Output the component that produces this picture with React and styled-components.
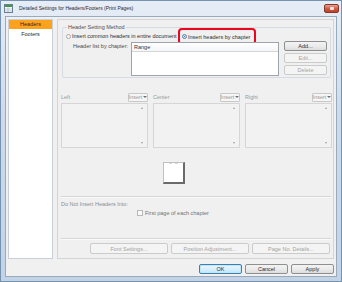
import React from "react";
import styled, { createGlobalStyle } from "styled-components";

const GlobalStyle = createGlobalStyle`
  html, body {
    margin: 0;
    padding: 0;
    background: #ffffff;
  }
  * {
    box-sizing: border-box;
  }
  body {
    font-family: "Liberation Sans", Arial, sans-serif;
    font-size: 5.5px;
    color: #222;
  }
`;

const Window = styled.div`
  width: 342px;
  height: 282px;
  border: 1px solid #7592b1;
  background: linear-gradient(#e6edf6, #cddbeb 40%, #c3d3e6);
  padding: 0 4px 4px 4px;
  display: flex;
  flex-direction: column;
`;

const TitleBar = styled.div`
  height: 15px;
  margin: 0 -4px;
  padding: 0 2px 0 3px;
  display: flex;
  align-items: flex-start;
`;

const AppIcon = styled.svg`
  width: 9px;
  height: 9px;
  margin-top: 3px;
  flex: none;
`;

const Title = styled.span`
  margin-left: 6px;
  line-height: 15px;
  font-size: 5px;
  color: #1f2a36;
  flex: 1;
  white-space: nowrap;
`;

const CloseButton = styled.div`
  width: 15px;
  height: 9px;
  margin-top: 3px;
  border: 1px solid #84382a;
  border-radius: 2px;
  background: linear-gradient(#e6a393, #cf5f48 50%, #c04128);
  display: flex;
  align-items: center;
  justify-content: center;

  &::after {
    content: "";
    width: 4px;
    height: 3px;
    background: #f4e4e0;
    border-radius: 1px;
  }
`;

const Client = styled.div`
  flex: 1;
  border: 1px solid #98aabd;
  background: #f0f0f0;
  padding: 2px;
  display: flex;
  flex-direction: column;
`;

const Main = styled.div`
  height: 240px;
  display: flex;
  gap: 4px;
`;

const SideList = styled.div`
  width: 45px;
  background: #ffffff;
  border: 1px solid #c9cfd6;
  display: flex;
  flex-direction: column;
`;

const SideItem = styled.div`
  height: 9px;
  line-height: 9px;
  text-align: center;
  color: #2a2a2a;
  background: ${(p) => (p.$active ? "#fca21d" : "transparent")};
  margin-bottom: 1px;
`;

const Panel = styled.div`
  width: 277px;
  border: 1px solid #d4d4d4;
  display: flex;
  flex-direction: column;
`;

const GroupBox = styled.fieldset`
  margin: 3px 2px 0 4px;
  padding: 0 3px 1px 3px;
  border: 1px solid #d5dbe0;
  border-radius: 2px;
  min-width: 0;
`;

const Legend = styled.legend`
  margin-left: 1px;
  padding: 0 1px;
  line-height: 8px;
  color: #4e4e4e;
`;

const RadioRow = styled.div`
  height: 10px;
  display: flex;
  align-items: center;
`;

const RadioOption = styled.label`
  display: flex;
  align-items: center;
  gap: 1px;
  width: ${(p) => (p.$width ? `${p.$width}px` : "auto")};
  color: #2e2e2e;
  white-space: nowrap;
`;

const Radio = styled.span`
  width: 5px;
  height: 5px;
  border-radius: 50%;
  border: 1px solid ${(p) => (p.$checked ? "#5f7fa3" : "#a8a8a8")};
  background: ${(p) =>
    p.$checked ? "radial-gradient(#3f7fc2 35%, #d7e4f1 45%)" : "#f6f6f6"};
  flex: none;
`;

const Highlight = styled.div`
  height: 17px;
  margin: -3px 0 -4px 0;
  padding: 0 4px 0 2px;
  border: 2px solid #e8071c;
  border-radius: 4px;
  display: flex;
  align-items: center;
`;

const ListRow = styled.div`
  height: 35px;
  display: flex;
  align-items: flex-start;
`;

const ListLabel = styled.div`
  width: 58px;
  margin: 2px 0 0 7px;
  color: #4a4a4a;
  white-space: nowrap;
`;

const ListBox = styled.div`
  width: 148px;
  height: 34px;
  margin-top: 1px;
  background: #ffffff;
  border: 1px solid #9ea4ab;
`;

const ListHead = styled.div`
  height: 9px;
  line-height: 8px;
  padding-left: 2px;
  border-bottom: 1px solid #d5d5d5;
  color: #333;
  background: linear-gradient(#ffffff, #f4f5f7);
`;

const SideButtons = styled.div`
  margin-left: 5px;
  display: flex;
  flex-direction: column;
  gap: 2px;
`;

const Button = styled.div`
  width: ${(p) => p.$w || 43}px;
  height: ${(p) => p.$h || 10}px;
  border: 1px solid
    ${(p) => (p.$default ? "#3c7fb1" : p.$disabled ? "#cbcbcb" : "#8e8f8f")};
  border-radius: 2px;
  background: ${(p) =>
    p.$disabled
      ? "#f4f4f4"
      : p.$default
      ? "linear-gradient(#eaf6fd, #d9f0fc 50%, #bee6fd)"
      : "linear-gradient(#f3f3f3, #ebebeb 50%, #dddddd)"};
  color: ${(p) => (p.$disabled ? "#a3a3a3" : "#2a2a2a")};
  display: flex;
  align-items: center;
  justify-content: center;
  white-space: nowrap;
  box-shadow: ${(p) => (p.$default ? "inset 0 0 0 1px #c4e5f6" : "none")};
`;

const Columns = styled.div`
  margin: 14px 4px 0 3px;
  display: grid;
  grid-template-columns: repeat(3, 87px);
  gap: 5px;
`;

const Column = styled.div`
  display: flex;
  flex-direction: column;
`;

const ColumnHead = styled.div`
  height: 10px;
  display: flex;
  align-items: center;
  justify-content: space-between;
  color: #9a9a9a;
`;

const InsertButton = styled.div`
  width: 20px;
  height: 9px;
  border: 1px solid #c8c8c8;
  background: #f6f6f6;
  border-radius: 1px;
  color: #9a9a9a;
  display: flex;
  align-items: center;
  justify-content: center;
  gap: 1px;
`;

const Caret = styled.span`
  width: 0;
  height: 0;
  border-left: 2px solid transparent;
  border-right: 2px solid transparent;
  border-top: 2px solid #6e6e6e;
`;

const TextBox = styled.div`
  height: 45px;
  margin-top: 1px;
  border: 1px solid #d6d6d6;
  background: #f2f2f2;
  display: flex;
  flex-direction: column;
  align-items: flex-end;
  justify-content: space-between;
  padding: 3px 4px 3px 0;
`;

const ScrollArrow = styled.span`
  width: 0;
  height: 0;
  border-left: 1px solid transparent;
  border-right: 1px solid transparent;
  ${(p) =>
    p.$up
      ? "border-bottom: 2px solid #a0a0a0;"
      : "border-top: 2px solid #a0a0a0;"}
`;

const PreviewPage = styled.div`
  width: 22px;
  height: 22px;
  margin: 14px 0 0 105px;
  background: #ffffff;
  border: 1px solid #c0c0c0;
  border-right: 2px solid #6a6a6a;
  border-bottom: 2px solid #6a6a6a;
  display: flex;
  justify-content: space-around;
  padding: 0 3px;
`;

const PageMark = styled.span`
  width: 3px;
  height: 1px;
  background: #d8d8d8;
`;

const Divider = styled.div`
  height: 1px;
  margin: ${(p) => p.$top}px 2px 0 3px;
  background: #d6d6d6;
  box-shadow: 0 1px 0 #fafafa;
`;

const SectionLabel = styled.div`
  margin: 3px 0 0 3px;
  line-height: 8px;
  color: #8d8d8d;
`;

const CheckRow = styled.label`
  height: 8px;
  margin: 1px 0 0 79px;
  display: flex;
  align-items: center;
  gap: 2px;
  color: #707070;
`;

const CheckBox = styled.span`
  width: 6px;
  height: 6px;
  border: 1px solid #b8b8b8;
  background: #f9f9f9;
`;

const ButtonRow = styled.div`
  margin: 4px 0 0 32px;
  display: flex;
  gap: 3px;
`;

const Footer = styled.div`
  margin-top: 5px;
  display: flex;
  justify-content: flex-end;
  gap: 3px;
`;

const columns = ["Left", "Center", "Right"];

export default function App() {
  return (
    <>
      <GlobalStyle />
      <Window>
        <TitleBar>
          <AppIcon viewBox="0 0 9 9">
            <rect x="0.5" y="0.5" width="8" height="8" fill="#fff" stroke="#6a7f8f" />
            <rect x="1" y="1" width="7" height="2" fill="#3c9a4a" />
            <path d="M1 5h7M1 7h7M4 3v5" stroke="#9fb0bd" strokeWidth="0.7" />
          </AppIcon>
          <Title>Detailed Settings for Headers/Footers (Print Pages)</Title>
          <CloseButton />
        </TitleBar>
        <Client>
          <Main>
            <SideList>
              <SideItem $active>Headers</SideItem>
              <SideItem>Footers</SideItem>
            </SideList>
            <Panel>
              <GroupBox>
                <Legend>Header Setting Method</Legend>
                <RadioRow>
                  <RadioOption $width={112}>
                    <Radio />
                    Insert common headers in entire document
                  </RadioOption>
                  <Highlight>
                    <RadioOption>
                      <Radio $checked />
                      Insert headers by chapter
                    </RadioOption>
                  </Highlight>
                </RadioRow>
                <ListRow>
                  <ListLabel>Header list by chapter:</ListLabel>
                  <ListBox>
                    <ListHead>Range</ListHead>
                  </ListBox>
                  <SideButtons>
                    <Button>Add...</Button>
                    <Button $disabled>Edit...</Button>
                    <Button $disabled>Delete</Button>
                  </SideButtons>
                </ListRow>
              </GroupBox>

              <Columns>
                {columns.map((name) => (
                  <Column key={name}>
                    <ColumnHead>
                      <span>{name}</span>
                      <InsertButton>
                        Insert
                        <Caret />
                      </InsertButton>
                    </ColumnHead>
                    <TextBox>
                      <ScrollArrow $up />
                      <ScrollArrow />
                    </TextBox>
                  </Column>
                ))}
              </Columns>

              <PreviewPage>
                <PageMark />
                <PageMark />
              </PreviewPage>

              <Divider $top={12} />
              <SectionLabel>Do Not Insert Headers Into:</SectionLabel>
              <CheckRow>
                <CheckBox />
                First page of each chapter
              </CheckRow>
              <Divider $top={21} />
              <ButtonRow>
                <Button $disabled $w={78} $h={11}>Font Settings...</Button>
                <Button $disabled $w={78} $h={11}>Position Adjustment...</Button>
                <Button $disabled $w={78} $h={11}>Page No. Details...</Button>
              </ButtonRow>
            </Panel>
          </Main>
          <Footer>
            <Button $default>OK</Button>
            <Button>Cancel</Button>
            <Button>Apply</Button>
          </Footer>
        </Client>
      </Window>
    </>
  );
}
